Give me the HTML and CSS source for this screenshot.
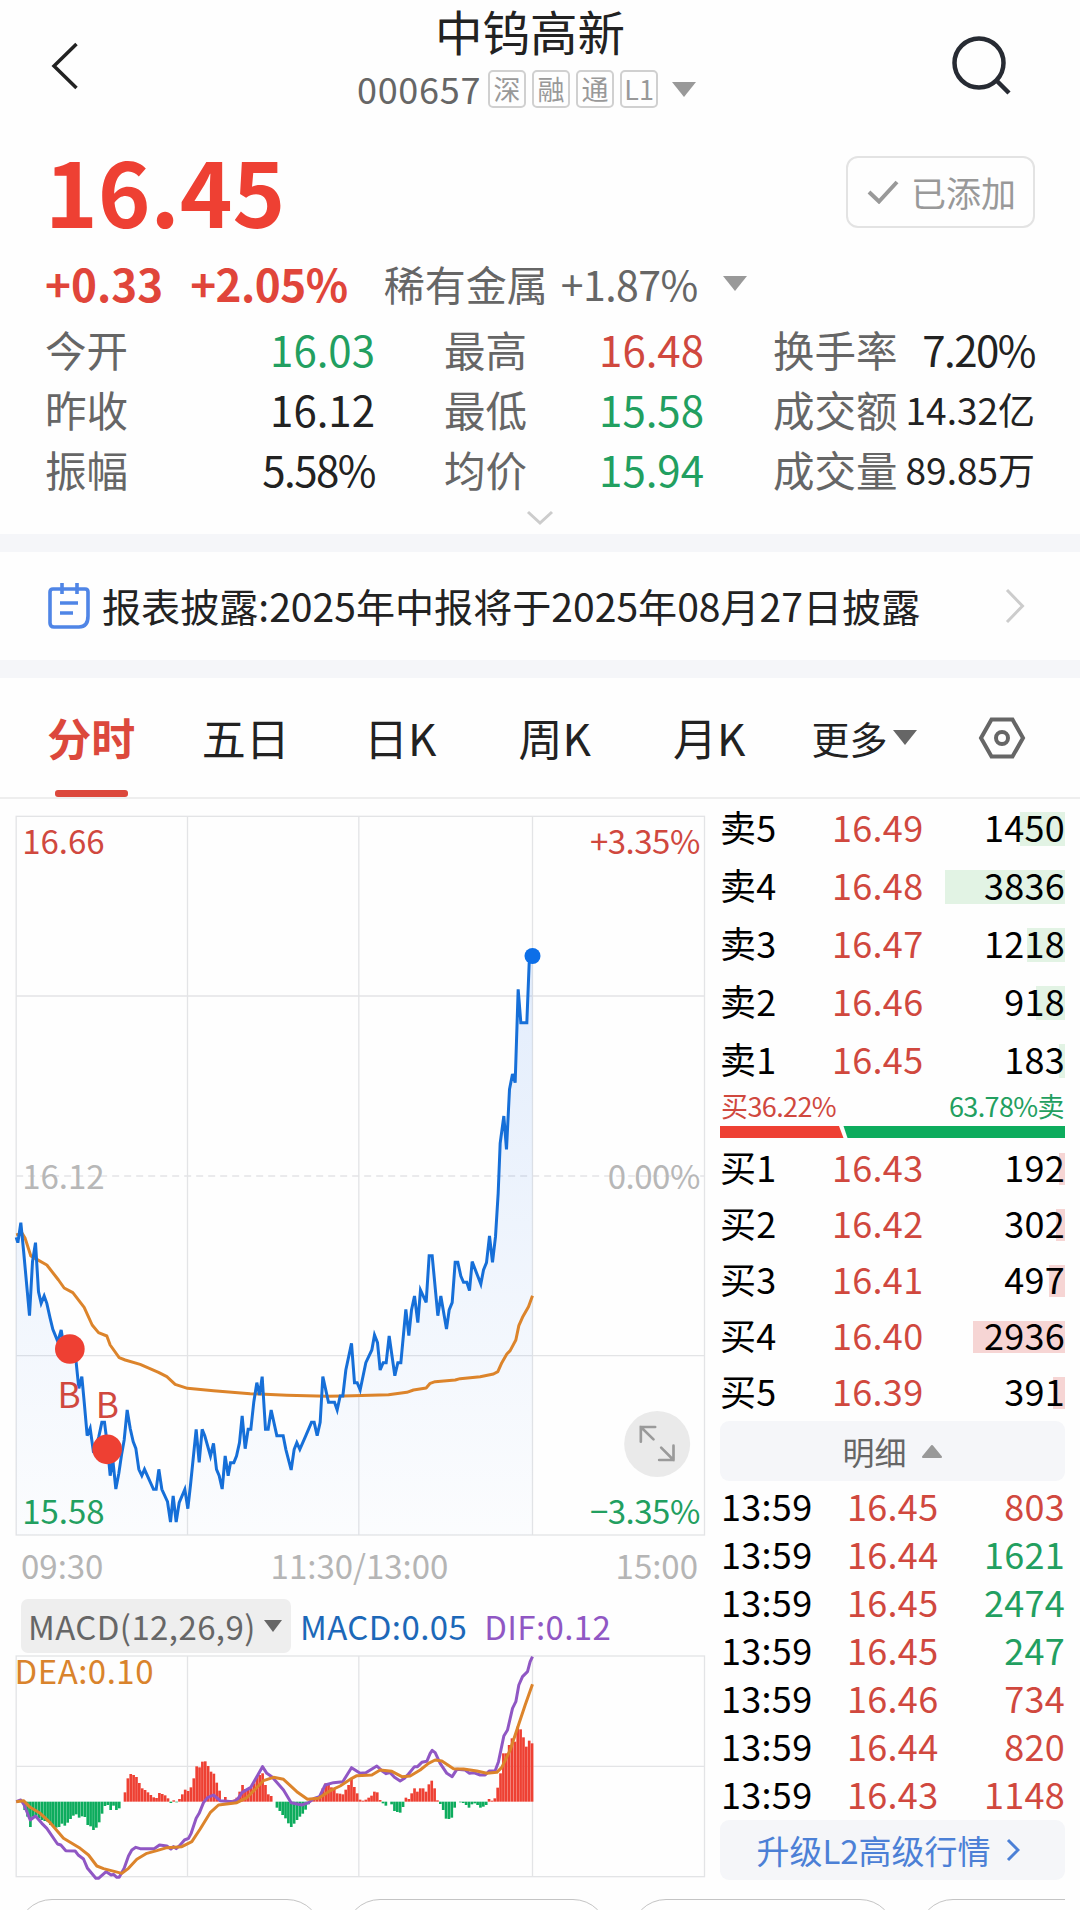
FILE: index.html
```
<!DOCTYPE html>
<html lang="zh-CN">
<head>
    <meta charset="UTF-8">
    <meta name="viewport" content="width=device-width, initial-scale=1.0">
    <title>中钨高新 000657</title>
    <link rel="stylesheet" href="styles.css">
</head>
<body>
    <header class="topbar">
        <svg class="back" viewBox="0 0 30 50"><path d="M26.5 3 L4 25 L26.5 47"/></svg>
        <div class="heading">
            <h1>中钨高新</h1>
            <div class="code">
                <span class="num">000657</span>
                <span class="tag">深</span><span class="tag">融</span><span class="tag">通</span><span class="tag">L1</span>
                <svg class="tri" viewBox="0 0 24 15"><path d="M0 0H24L12 15Z"/></svg>
            </div>
        </div>
        <svg class="search" viewBox="0 0 62 62"><circle cx="28" cy="28" r="24.5"/><path d="M45 45 L58 58"/></svg>
    </header>

    <section class="quote">
        <div class="price-row">
            <strong class="price">16.45</strong>
            <button class="added">
                <svg viewBox="0 0 32 24"><path d="M2 12 L12 21.5 L30 2"/></svg>
                <span>已添加</span>
            </button>
        </div>
        <div class="change-row">
            <b class="diff">+0.33</b>
            <b class="pct">+2.05%</b>
            <span class="sector">稀有金属</span>
            <span class="sector-pct">+1.87%</span>
            <svg class="tri" viewBox="0 0 24 15"><path d="M0 0H24L12 15Z"/></svg>
        </div>
        <dl class="stats">
            <div><dt>今开</dt><dd class="down">16.03</dd></div>
            <div><dt>最高</dt><dd class="up">16.48</dd></div>
            <div><dt>换手率</dt><dd class="tight">7.20%</dd></div>
            <div><dt>昨收</dt><dd>16.12</dd></div>
            <div><dt>最低</dt><dd class="down">15.58</dd></div>
            <div><dt>成交额</dt><dd class="small">14.32亿</dd></div>
            <div><dt>振幅</dt><dd class="tight">5.58%</dd></div>
            <div><dt>均价</dt><dd class="down">15.94</dd></div>
            <div><dt>成交量</dt><dd class="small">89.85万</dd></div>
        </dl>
        <svg class="more" viewBox="0 0 28 16"><path d="M2 2 L14 13 L26 2"/></svg>
    </section>

    <section class="notice">
        <svg class="note" viewBox="0 0 42 48">
            <path d="M5 7H37Q40 7 40 10V34Q40 45 31 45H6Q2 45 2 41V10Q2 7 5 7Z"/>
            <path d="M14 1V12M29 1V12M12 21H30M12 31H25"/>
        </svg>
        <p>报表披露:2025年中报将于2025年08月27日披露</p>
        <svg class="arrow" viewBox="0 0 20 36"><path d="M2 2 L17.500 18 L2 34"/></svg>
    </section>

    <nav class="tabs">
        <a class="tab active">分时</a>
        <a class="tab">五日</a>
        <a class="tab">日K</a>
        <a class="tab">周K</a>
        <a class="tab">月K</a>
        <a class="drop">更多<svg class="tri" viewBox="0 0 24 15"><path d="M0 0H24L12 15Z"/></svg></a>
        <svg class="gear" viewBox="0 0 48 42"><path d="M13.500 2.500H34.500L45 21L34.500 39.500H13.500L3 21Z"/><circle cx="24" cy="21" r="6"/></svg>
    </nav>

    <main class="board">
        <div class="charts">
            <!-- 3 units per pixel -->
            <svg class="chart minute" viewBox="45 -1095 2072 2166">
                <defs>
                    <linearGradient id="area" x1="0" y1="-672" x2="0" y2="1065" gradientUnits="userSpaceOnUse">
                        <stop offset="0" stop-color="#1a6fee" stop-opacity=".12"/>
                        <stop offset="1" stop-color="#1a6fee" stop-opacity=".012"/>
                    </linearGradient>
                </defs>
                <g class="grid">
                    <rect x="48" y="-1091" width="2065" height="2156"/>
                    <path d="M562 -1091V1065M1076 -1091V1065M1597 -1091V1065M48 -552H2113M48 527H2113"/>
                    <path class="dash" d="M48 -12H2113"/>
                </g>
                <path id="fill" fill="url(#area)"/>
                <polyline class="avg" points="48,165 66,160 75,175 92,228 110,238 140,255 175,300 192,324 218,338 252,382 276,435 295,458 320,468 330,495 357,533 375,540 420,553 475,577 500,590 525,613 562,625 640,632 750,641 860,646 980,649 1030,648 1165,644 1220,637 1240,630 1278,624 1290,610 1305,605 1365,600 1380,596 1440,590 1480,582 1493,575 1505,548 1520,522 1530,512 1547,480 1556,437 1567,412 1585,380 1597,347"/>
                <polyline id="line" class="line" points="48,172 53,188 62,128 70,210 88,407 97,245 106,188 115,335 123,370 132,348 140,370 150,415 158,448 173,485 183,450 192,505 209,507 218,540 228,547 236,625 245,590 252,665 261,767 270,745 279,810 288,800 296,770 305,727 313,727 321,790 330,887 338,840 347,927 356,880 364,825 372,780 381,690 390,745 399,785 407,805 416,868 425,887 433,868 460,928 468,928 476,868 485,928 502,965 511,1026 519,948 528,1026 537,968 554,928 563,986 571,915 588,748 597,847 606,748 614,768 631,828 640,790 649,868 657,887 666,927 675,828 684,887 691,848 701,848 709,828 718,788 726,708 735,806 744,748 752,748 761,665 770,608 778,645 786,590 796,748 804,748 813,690 830,767 849,767 857,808 873,870 882,808 890,788 899,808 917,767 934,727 942,727 951,767 960,727 968,590 985,667 1003,667 1011,690 1020,648 1028,648 1037,570 1054,490 1063,608 1071,608 1080,630 1097,548 1115,510 1123,465 1132,488 1140,570 1149,548 1158,548 1167,468 1184,587 1193,548 1202,548 1217,388 1226,467 1234,390 1243,348 1253,428 1261,330 1278,367 1287,227 1296,227 1313,407 1322,348 1339,447 1347,390 1356,368 1365,247 1373,247 1382,288 1390,307 1400,307 1408,332 1416,245 1442,312 1450,270 1459,248 1468,168 1477,247 1486,170 1494,40 1500,-110 1511,-192 1519,-92 1528,-272 1537,-318 1545,-292 1554,-572 1562,-472 1580,-472 1587,-650 1597,-672"/>
                <circle class="last" cx="1597" cy="-672" r="24"/>
                <circle class="trade" cx="209" cy="507" r="44.500"/>
                <circle class="trade" cx="321" cy="808" r="44.500"/>
                <g class="label">
                    <text class="up mark" x="172" y="683">B</text>
                    <text class="up mark" x="287" y="713">B</text>
                    <text class="up" x="66" y="-978">16.66</text>
                    <text class="up end" x="2099" y="-978">+3.35%</text>
                    <text class="flat" x="66" y="27">16.12</text>
                    <text class="flat end" x="2099" y="27">0.00%</text>
                    <text class="down" x="66" y="1032">15.58</text>
                    <text class="down end" x="2099" y="1032">−3.35%</text>
                </g>
                <g class="expand">
                    <circle cx="1971" cy="792" r="99"/>
                    <path d="M1965 741H1922V785M1922 741L1960 778M1977 840H2020V797M2020 840L1983 803"/>
                </g>
            </svg>
            <div class="axis"><span>09:30</span><span>11:30/13:00</span><span>15:00</span></div>
            <div class="indicator">
                <span class="chip">MACD(12,26,9)<svg viewBox="0 0 18 12"><path d="M0 0H18L9 12Z"/></svg></span>
                <span class="macd">MACD:0.05</span>
                <span class="dif">DIF:0.12</span>
            </div>
            <svg class="chart sub" viewBox="45 375 2072 675">
                <g class="grid">
                    <rect x="48" y="378" width="2065" height="662"/>
                    <path d="M562 378V1040M1076 378V1040M1597 378V1040M48 709H2113"/>
                </g>
                <g id="bars"></g>
                <polyline class="dif-line" points="48,815 62,810 72,825 90,870 106,858 125,880 140,895 172,942 182,945 197,962 225,963 235,976 250,987 262,1015 287,1045 295,1045 318,1025 333,1035 340,1033 350,1042 357,1042 372,1015 385,978 395,960 407,952 420,956 462,956 478,945 500,948 512,957 520,950 528,956 540,945 553,930 565,925 573,910 588,865 597,850 610,818 622,803 640,795 660,812 700,815 712,808 726,787 752,772 770,740 787,710 800,730 815,740 850,780 873,818 905,825 925,818 942,805 958,800 975,765 1000,758 1028,755 1054,713 1080,730 1097,728 1130,708 1145,722 1158,731 1170,728 1183,742 1200,753 1213,745 1225,732 1243,710 1252,710 1265,697 1280,694 1290,670 1296,661 1305,668 1320,700 1340,730 1356,740 1370,718 1395,720 1408,730 1420,728 1440,735 1455,735 1467,723 1485,722 1495,695 1511,618 1522,600 1537,535 1547,515 1556,465 1567,440 1582,425 1590,395 1597,380"/>
                <polyline class="avg" points="48,815 70,812 90,832 120,850 150,878 190,925 240,955 265,975 290,1008 310,1016 345,1025 365,1030 385,1015 410,988 440,970 470,962 500,953 545,950 575,935 600,897 630,848 655,825 710,818 740,803 790,752 820,742 850,748 890,785 922,808 955,805 990,782 1020,768 1055,745 1070,737 1115,735 1140,720 1175,724 1205,740 1230,738 1260,720 1285,700 1305,690 1325,693 1360,716 1390,717 1430,723 1460,730 1490,727 1505,712 1530,660 1555,585 1575,525 1597,463"/>
                <text class="dea" x="43" y="462">DEA:0.10</text>
            </svg>
        </div>

        <aside class="book">
            <ul class="depth sell">
                <li><span>卖5</span><span>16.49</span><em><i style="width:45px"></i>1450</em></li>
                <li><span>卖4</span><span>16.48</span><em><i style="width:120px"></i>3836</em></li>
                <li><span>卖3</span><span>16.47</span><em><i style="width:38px"></i>1218</em></li>
                <li><span>卖2</span><span>16.46</span><em><i style="width:29px"></i>918</em></li>
                <li><span>卖1</span><span>16.45</span><em><i style="width:6px"></i>183</em></li>
            </ul>
            <div class="ratio">
                <p><span class="up">买36.22%</span><span class="down">63.78%卖</span></p>
                <svg viewBox="0 0 345 12"><path class="buy-part" d="M0 0H119L123.500 12H0Z"/><path class="sell-part" d="M123.500 0H345V12H127.500Z"/></svg>
            </div>
            <ul class="depth buy">
                <li><span>买1</span><span>16.43</span><em><i style="width:6px"></i>192</em></li>
                <li><span>买2</span><span>16.42</span><em><i style="width:9px"></i>302</em></li>
                <li><span>买3</span><span>16.41</span><em><i style="width:16px"></i>497</em></li>
                <li><span>买4</span><span>16.40</span><em><i style="width:92px"></i>2936</em></li>
                <li><span>买5</span><span>16.39</span><em><i style="width:12px"></i>391</em></li>
            </ul>
            <div class="box detail">明细<svg viewBox="0 0 22 15"><path d="M11 2L20 13H2Z"/></svg></div>
            <ul class="ticks">
                <li><span>13:59</span><span>16.45</span><em class="up">803</em></li>
                <li><span>13:59</span><span>16.44</span><em class="down">1621</em></li>
                <li><span>13:59</span><span>16.45</span><em class="down">2474</em></li>
                <li><span>13:59</span><span>16.45</span><em class="down">247</em></li>
                <li><span>13:59</span><span>16.46</span><em class="up">734</em></li>
                <li><span>13:59</span><span>16.44</span><em class="up">820</em></li>
                <li><span>13:59</span><span>16.43</span><em class="up">1148</em></li>
            </ul>
            <div class="box upgrade">升级L2高级行情<svg viewBox="0 0 14 24"><path d="M2 2L12 12L2 22"/></svg></div>
        </aside>
    </main>

    <footer class="pills"><span class="w1"></span><span class="w2"></span><span class="w3"></span><span class="w4"></span></footer>

    <script>
        const SVG_NS = "http://www.w3.org/2000/svg";
        const ZERO = 815;
        const STEP = 8.6;

        // histogram, one value per minute
        const hist = [
            0, 2, 0, -25, -45, -76, -45, -42, -50, -55, -58, -60, -70, -76, -78, -76, -66, -72, -63, -52,
            -42, -38, -48, -44, -46, -70, -74, -85, -78, -62, -36, -13, -10, -25, -12, -25, -20, 0, 28, 70,
            83, 80, 74, 56, 40, 35, 28, 20, 13, 11, 26, 23, 19, 10, -4, 4, -2, 8, 22, 36,
            32, 43, 70, 106, 103, 120, 121, 107, 90, 84, 57, 33, 5, 14, 3, 4, 6, 12, 30, 50,
            38, 40, 42, 55, 75, 80, 85, 50, 22, 17, 0, -18, -28, -40, -50, -65, -76, -66, -55, -45,
            -36, -24, -8, 5, 8, 8, 15, 40, 55, 52, 43, 40, 25, 24, 22, 36, 50, 70, 44, 25,
            6, 3, 6, 12, 18, 30, 28, 5, -5, -12, 0, -8, -28, -31, -33, -16, 12, 8, 25, 40,
            30, 40, 40, 30, 52, 63, 40, 4, -7, -25, -51, -52, -48, -18, 0, -2, -4, -10, -18, -8,
            -5, -10, -18, -15, -10, 8, 3, 10, 42, 85, 145, 145, 170, 190, 180, 225, 217, 193, 165, 183, 175
        ];

        const bars = document.getElementById("bars");
        hist.forEach((v, i) => {
            if (!v) return;
            const r = document.createElementNS(SVG_NS, "rect");
            r.setAttribute("x", 48 + STEP * i - 4.3);
            r.setAttribute("y", v > 0 ? ZERO - v : ZERO);
            r.setAttribute("width", 8);
            r.setAttribute("height", Math.abs(v));
            r.setAttribute("class", v > 0 ? "pos" : "neg");
            bars.appendChild(r);
        });

        const pts = document.getElementById("line").getAttribute("points");
        document.getElementById("fill").setAttribute("d", `M${pts} L1597,1065 L48,1065Z`);
    </script>
</body>
</html>
```
FILE: styles.css
```
*{box-sizing:border-box;margin:0;padding:0;}

body{
  --red:#ee4033;
  --up:#d0483e;
  --down:#229f60;
  --green:#0dac5d;
  --band:#f5f6f9;
  width:1080px;
  height:1910px;
  overflow:hidden;
  background:#fefefe;
  color:#222;
  font-family:"Noto Sans CJK SC","Noto Sans",sans-serif;
  line-height:1;
}

svg{display:block;fill:none;flex:none;}
ul{list-style:none;}
em,i{font-style:normal;}
.up{color:var(--up);fill:var(--up);}
.down{color:var(--down);fill:var(--down);}
.tri{width:24px;height:15px;fill:#999;}

/* top bar */
.topbar{
  display:grid;
  grid-template-columns:357px 350px 1fr;
  height:130px;
}
.back{width:30px;height:50px;margin:41px 0 0 50px;stroke:#222;stroke-width:3.5;}
.heading h1{
  margin-left:-4px;
  font-size:47.5px;
  font-weight:400;
  line-height:62px;
  text-align:center;
}
.code{display:flex;align-items:center;height:38px;margin-top:8px;}
.code .num{font-size:36px;color:#666;margin-right:7px;letter-spacing:.7px;line-height:34px;padding-bottom:3px;}
.tag{
  width:38px;
  height:38px;
  margin-right:6px;
  border:2px solid #d0d0d0;
  border-radius:5px;
  color:#999;
  font-size:27px;
  line-height:33px;
  text-align:center;
}
.code .tri{margin-left:8px;}
.search{width:62px;height:62px;margin:35px 0 0 244px;stroke:#272b33;stroke-width:4.5;}

/* quote */
.quote{height:404px;padding:0 45px 0 45px;}
.price-row{display:flex;justify-content:space-between;height:120px;}
.price{font-size:89.5px;line-height:119px;color:var(--red);}
.added{
  display:flex;
  align-items:center;
  width:189px;
  height:72px;
  margin-top:26px;
  padding-left:19px;
  border:2px solid #e3e3e3;
  border-radius:12px;
  background:none;
  color:#999;
  font:35px/64px "Noto Sans CJK SC",sans-serif;
}
.added svg{width:32px;height:24px;margin-right:12px;stroke:#999;stroke-width:4;}
.change-row{display:flex;align-items:center;height:60px;margin-top:3px;line-height:60px;}
.change-row b{font-size:44px;color:#e0453a;}
.change-row .pct{margin-left:27px;letter-spacing:-.5px;}
.sector,.sector-pct{font-size:41px;color:#666;}
.sector{margin-left:36px;}
.sector-pct{margin-left:13px;letter-spacing:-.5px;}
.change-row .tri{margin-left:25px;}
.stats{
  display:grid;
  grid-template-columns:330px 260px 262px;
  column-gap:69px;
  grid-auto-rows:60px;
  margin-top:6px;
  line-height:60px;
}
.stats div{display:flex;justify-content:space-between;}
.stats dt{font-size:41.5px;color:#666;}
.stats dd{font-size:42px;white-space:nowrap;}
.stats dd.small{font-size:37px;}
.stats dd.tight{letter-spacing:-1.5px;}
.more{width:28px;height:16px;margin:11px auto 0;stroke:#ccc;stroke-width:3;}

/* notice */
.notice{
  display:flex;
  align-items:center;
  height:144px;
  padding:0 55px 0 48px;
  border:solid var(--band);
  border-width:18px 0;
}
.note{width:42px;height:48px;stroke:#4f85e6;stroke-width:3.6;}
.notice p{margin-left:12px;padding-bottom:2px;font-size:39.1px;line-height:50px;white-space:nowrap;}
.arrow{width:20px;height:36px;margin-left:auto;stroke:#ccc;stroke-width:3;}

/* tabs */
.tabs{
  display:flex;
  align-items:center;
  height:121px;
  padding:0 54px 0 14px;
  border-bottom:2px solid #eee;
}
.tab{
  position:relative;
  width:154.500px;
  font-size:44px;
  line-height:117px;
  text-align:center;
  white-space:nowrap;
}
.active{font-weight:700;color:#dc483c;}
.active::after{
  content:"";
  position:absolute;
  left:41px;
  bottom:-1px;
  width:73px;
  height:7px;
  border-radius:3px;
  background:#dc483c;
}
.drop{display:flex;align-items:center;margin-left:25px;font-size:38px;line-height:117px;}
.drop .tri{margin-left:5px;fill:#666;}
.gear{width:48px;height:42px;margin-left:auto;stroke:#666;stroke-width:4;}

/* board */
.board{display:flex;height:1087px;}
.charts{width:705px;padding:16px 0 0 15px;}
.chart{width:691px;overflow:visible;}
.minute{height:722px;}
.sub{height:225px;}
.grid{stroke:#e3e4e6;stroke-width:4;}
.grid .dash{stroke-dasharray:21 15;}
.line{stroke:#166fd8;stroke-width:9;}
.avg{stroke:#dc842b;stroke-width:9;stroke-linejoin:round;}
.dif-line{stroke:#9057c4;stroke-width:9;stroke-linejoin:round;}
.last{fill:#0d6fe8;}
.trade{fill:var(--red);}
.label text{font-size:99px;}
.label .mark{font-size:106px;}
.label .end{text-anchor:end;letter-spacing:-1.5px;}
.flat{fill:#b7b7b7;}
.expand circle{fill:#eaeaea;}
.expand path{stroke:#9a9a9a;stroke-width:8;stroke-linecap:round;}
.dea{font-size:99px;letter-spacing:1.5px;fill:#d9832c;}
.pos{fill:var(--red);}
.neg{fill:var(--green);}
.axis{
  display:flex;
  justify-content:space-between;
  padding:0 7px 0 6px;
  font-size:33px;
  line-height:56px;
  color:#b5b5b5;
}
.indicator{
  display:flex;
  align-items:center;
  height:54px;
  margin:6px 0 2px 6px;
  font-size:33px;
  line-height:50px;
  letter-spacing:.4px;
}
.chip{
  display:flex;
  align-items:center;
  width:270px;
  height:54px;
  padding-left:7px;
  border-radius:7px;
  background:#eee;
  color:#666;
}
.chip svg{width:18px;height:12px;margin-left:8px;fill:#666;}
.macd{margin-left:9px;color:#1c68b8;}
.dif{margin-left:17px;color:#9057c4;}

/* order book */
.book{width:345px;margin-left:15px;}
.book li{display:grid;color:#000;font-size:36px;letter-spacing:.3px;}
.book em{text-align:right;}
.depth li{grid-template-columns:112px 1fr 120px;}
.depth span:nth-of-type(2),.ticks span:nth-of-type(2){color:var(--up);}
.depth em{position:relative;}
.depth i{position:absolute;right:0;z-index:-1;}
.sell li{height:58px;line-height:55px;}
.sell i{top:13px;height:34px;background:#e2f3e4;}
.ratio{height:52px;padding-top:2px;}
.ratio p{
  display:flex;
  justify-content:space-between;
  padding:0 1px;
  font-size:27px;
  line-height:30px;
  letter-spacing:-.6px;
}
.ratio svg{width:345px;height:12px;margin-top:5px;}
.buy-part{fill:var(--red);}
.sell-part{fill:var(--green);}
.buy li{height:56px;line-height:51px;}
.buy i{top:12px;height:32px;background:#f6d5d4;}
.box{
  display:flex;
  align-items:center;
  justify-content:center;
  height:60px;
  border-radius:9px;
  background:var(--band);
  font-size:32px;
  line-height:56px;
}
.detail{color:#666;}
.detail svg{width:22px;height:15px;margin-left:14px;fill:#999;stroke:#999;stroke-width:2;stroke-linejoin:round;}
.ticks li{height:48px;padding-left:1px;grid-template-columns:126px 1fr 1fr;line-height:48px;}
.upgrade{margin-top:3px;padding-right:9px;font-size:33px;color:#4c80d6;}
.upgrade svg{width:14px;height:24px;margin-left:15px;stroke:#4c80d6;stroke-width:3;}

/* bottom pills, cut by the screen edge */
.pills{display:flex;gap:23px;width:1065px;height:24px;padding:13px 0 0 17px;overflow:hidden;}
.pills span{flex:none;height:70px;border:1px solid #c4c4c4;border-radius:35px;}
.w1{width:305px;}
.w2{width:263px;}
.w3{width:264px;}
.w4{width:280px;}
```
